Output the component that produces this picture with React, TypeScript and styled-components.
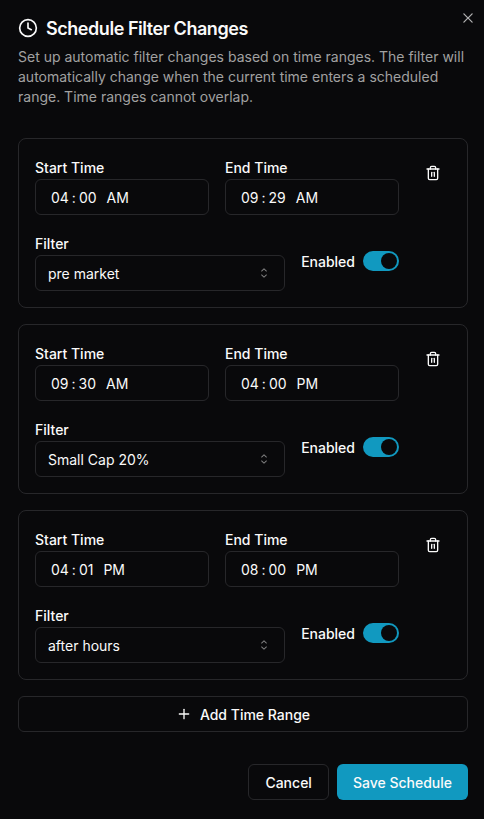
import React, { useState } from "react";
import styled, { createGlobalStyle } from "styled-components";
import { Clock, Plus, Trash2 } from "lucide-react";

const GlobalStyle = createGlobalStyle`
  *, *::before, *::after { box-sizing: border-box; }
  body {
    margin: 0;
    background: #09090b;
    color: #fafafa;
    font-family: Inter, sans-serif;
    font-size: 14px;
    line-height: 20px;
    -webkit-font-smoothing: antialiased;
  }
  button { font: inherit; color: inherit; cursor: pointer; }
`;

const Dialog = styled.main`
  position: relative;
  display: flex;
  flex-direction: column;
  width: 484px;
  height: 819px;
  padding: 18px 16px 19px 18px;
  overflow: hidden;
  background: #09090b;
`;

const CloseButton = styled.button`
  position: absolute;
  top: 10px;
  right: 8px;
  display: flex;
  padding: 0;
  border: 0;
  background: none;
  opacity: 0.7;
`;

const Header = styled.header`
  display: flex;
  flex-direction: column;
  gap: 9px;
  height: 120px;
`;

const Title = styled.h2`
  display: flex;
  align-items: center;
  gap: 8px;
  margin: 0;
  height: 20px;
  font-size: 18px;
  line-height: 20px;
  font-weight: 600;
  letter-spacing: -0.45px;
`;

const TitleText = styled.span`
  padding-top: 2px;
`;

const Description = styled.p`
  margin: 0;
  color: #a1a1a1;
`;

const RangeList = styled.div`
  display: flex;
  flex-direction: column;
  gap: 16px;
  width: 450px;
`;

const RangeCard = styled.section`
  display: flex;
  gap: 16px;
  height: 170px;
  padding: 16px;
  border: 1px solid #27272a;
  border-radius: 8px;
`;

const RangeFields = styled.div`
  display: flex;
  flex-direction: column;
  gap: 16px;
  width: 364px;
`;

const FieldRow = styled.div`
  display: flex;
  gap: 16px;
`;

const Field = styled.div`
  flex: 1;
  min-width: 0;
`;

const Label = styled.span`
  display: block;
  height: 24px;
  padding-top: 3px;
  font-weight: 500;
`;

const TimeInput = styled.div`
  display: flex;
  align-items: center;
  height: 36px;
  padding: 1px 15px 0;
  border: 1px solid #27272a;
  border-radius: 6px;
`;

const TimeSeparator = styled.span`
  width: 10px;
  text-align: center;
`;

const Meridiem = styled.span`
  margin-left: 10px;
`;

const SelectTrigger = styled.button`
  display: flex;
  align-items: center;
  justify-content: space-between;
  width: 100%;
  height: 36px;
  padding: 0 12px;
  border: 1px solid #27272a;
  border-radius: 6px;
  background: transparent;

  svg { opacity: 0.5; }
`;

const EnabledField = styled.div`
  display: flex;
  align-items: center;
  gap: 8px;
  height: 60px;
  font-weight: 500;
`;

const ControlText = styled.span`
  padding-top: 1px;
`;

const Switch = styled.button<{ $on: boolean }>`
  display: flex;
  align-items: center;
  justify-content: ${(p) => (p.$on ? "flex-end" : "flex-start")};
  width: 36px;
  height: 20px;
  padding: 2px;
  border: 0;
  border-radius: 10px;
  background: ${(p) => (p.$on ? "#1199c0" : "#27272a")};
`;

const Thumb = styled.span`
  width: 16px;
  height: 16px;
  border-radius: 50%;
  background: #09090b;
`;

const IconButton = styled.button`
  display: flex;
  align-items: center;
  justify-content: center;
  width: 36px;
  height: 36px;
  padding: 0;
  border: 0;
  background: none;
`;

const Button = styled.button<{ $primary?: boolean }>`
  display: flex;
  align-items: center;
  justify-content: center;
  gap: 8px;
  height: 36px;
  padding: 0 16px;
  border: ${(p) => (p.$primary ? "0" : "1px solid #27272a")};
  border-radius: 6px;
  background: ${(p) => (p.$primary ? "#1199c0" : "transparent")};
  font-weight: 500;
`;

const Footer = styled.footer`
  display: flex;
  justify-content: flex-end;
  gap: 8px;
  width: 450px;
  margin-top: 32px;
`;

const CrossIcon = () => (
  <svg width="16" height="16" viewBox="0 0 15 15" fill="currentColor">
    <path
      fillRule="evenodd"
      clipRule="evenodd"
      d="M11.7816 4.03157C12.0062 3.80702 12.0062 3.44295 11.7816 3.2184C11.5571 2.99385 11.193 2.99385 10.9685 3.2184L7.50005 6.68682L4.03164 3.2184C3.80708 2.99385 3.44301 2.99385 3.21846 3.2184C2.99391 3.44295 2.99391 3.80702 3.21846 4.03157L6.68688 7.49999L3.21846 10.9684C2.99391 11.193 2.99391 11.5571 3.21846 11.7816C3.44301 12.0062 3.80708 12.0062 4.03164 11.7816L7.50005 8.31316L10.9685 11.7816C11.193 12.0062 11.5571 12.0062 11.7816 11.7816C12.0062 11.5571 12.0062 11.193 11.7816 10.9684L8.31322 7.49999L11.7816 4.03157Z"
    />
  </svg>
);

const SortIcon = () => (
  <svg width="16" height="16" viewBox="0 0 15 15" fill="currentColor">
    <path
      fillRule="evenodd"
      clipRule="evenodd"
      d="M4.93179 5.43179C4.75605 5.60753 4.75605 5.89245 4.93179 6.06819C5.10753 6.24392 5.39245 6.24392 5.56819 6.06819L7.49999 4.13638L9.43179 6.06819C9.60753 6.24392 9.89245 6.24392 10.0682 6.06819C10.2439 5.89245 10.2439 5.60753 10.0682 5.43179L7.81819 3.18179C7.73379 3.0974 7.61933 3.04999 7.49999 3.04999C7.38064 3.04999 7.26618 3.0974 7.18179 3.18179L4.93179 5.43179ZM10.0682 9.56819C10.2439 9.39245 10.2439 9.10753 10.0682 8.93179C9.89245 8.75605 9.60753 8.75605 9.43179 8.93179L7.49999 10.8636L5.56819 8.93179C5.39245 8.75605 5.10753 8.75605 4.93179 8.93179C4.75605 9.10753 4.75605 9.39245 4.93179 9.56819L7.18179 11.8182C7.35753 11.9939 7.64245 11.9939 7.81819 11.8182L10.0682 9.56819Z"
    />
  </svg>
);

type Time = [hour: string, minute: string, meridiem: string];

interface TimeRange {
  start: Time;
  end: Time;
  filter: string;
}

const ranges: TimeRange[] = [
  { start: ["04", "00", "AM"], end: ["09", "29", "AM"], filter: "pre market" },
  { start: ["09", "30", "AM"], end: ["04", "00", "PM"], filter: "Small Cap 20%" },
  { start: ["04", "01", "PM"], end: ["08", "00", "PM"], filter: "after hours" },
];

const TimeField = ({ label, time }: { label: string; time: Time }) => (
  <Field>
    <Label>{label}</Label>
    <TimeInput>
      <span>{time[0]}</span>
      <TimeSeparator>:</TimeSeparator>
      <span>{time[1]}</span>
      <Meridiem>{time[2]}</Meridiem>
    </TimeInput>
  </Field>
);

const Range = ({ range }: { range: TimeRange }) => {
  const [enabled, setEnabled] = useState(true);
  return (
    <RangeCard>
      <RangeFields>
        <FieldRow>
          <TimeField label="Start Time" time={range.start} />
          <TimeField label="End Time" time={range.end} />
        </FieldRow>
        <FieldRow>
          <Field>
            <Label>Filter</Label>
            <SelectTrigger>
              <ControlText>{range.filter}</ControlText>
              <SortIcon />
            </SelectTrigger>
          </Field>
          <EnabledField>
            <ControlText>Enabled</ControlText>
            <Switch
              $on={enabled}
              role="switch"
              aria-checked={enabled}
              aria-label="Enabled"
              onClick={() => setEnabled(!enabled)}
            >
              <Thumb />
            </Switch>
          </EnabledField>
        </FieldRow>
      </RangeFields>
      <IconButton aria-label="Remove time range">
        <Trash2 size={16} />
      </IconButton>
    </RangeCard>
  );
};

export default function App() {
  return (
    <>
      <GlobalStyle />
      <Dialog>
        <CloseButton aria-label="Close">
          <CrossIcon />
        </CloseButton>
        <Header>
          <Title>
            <Clock size={20} />
            <TitleText>Schedule Filter Changes</TitleText>
          </Title>
          <Description>
            Set up automatic filter changes based on time ranges. The filter will
            automatically change when the current time enters a scheduled range.
            Time ranges cannot overlap.
          </Description>
        </Header>
        <RangeList>
          {ranges.map((range) => (
            <Range key={range.filter} range={range} />
          ))}
          <Button>
            <Plus size={16} />
            <ControlText>Add Time Range</ControlText>
          </Button>
        </RangeList>
        <Footer>
          <Button>
            <ControlText>Cancel</ControlText>
          </Button>
          <Button $primary>
            <ControlText>Save Schedule</ControlText>
          </Button>
        </Footer>
      </Dialog>
    </>
  );
}
